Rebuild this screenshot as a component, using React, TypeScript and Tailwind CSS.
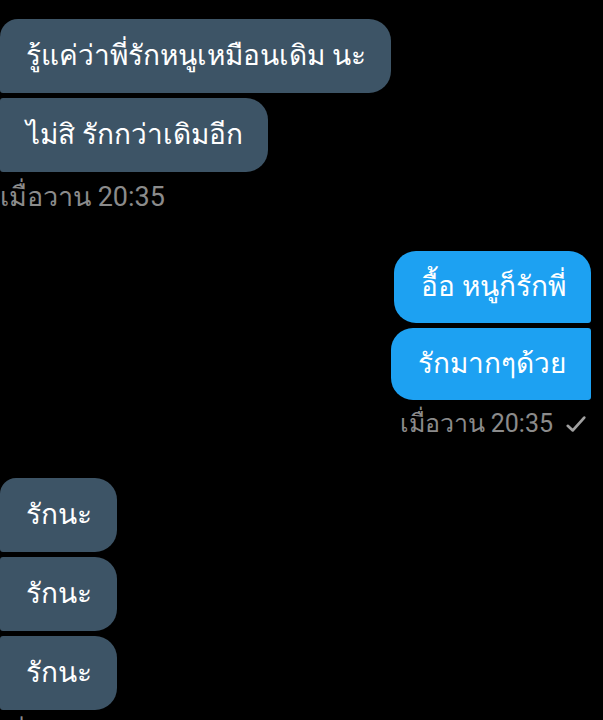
import React from "react";

const font = "font-['Roboto','Noto_Sans',sans-serif]";

const Check = () => (
  <svg width="22" height="22" viewBox="0 0 24 24" fill="none" stroke="#a0a0a0" strokeWidth="3" strokeLinecap="round" strokeLinejoin="round">
    <path d="M3 14l5.5 5L21 5" />
  </svg>
);

const Left: React.FC<{ text: string; cls: string }> = ({ text, cls }) => (
  <div className={`self-start bg-[#3d5466] text-white text-[28px] leading-[34px] pl-[26px] pr-[25px] py-[20px] ${cls}`}>
    {text}
  </div>
);

const Right: React.FC<{ text: string; cls: string }> = ({ text, cls }) => (
  <div className={`self-end bg-[#1da1f2] text-white text-[28px] leading-[34px] pl-[27px] pr-[25px] py-[19px] ${cls}`}>
    {text}
  </div>
);

export default function App() {
  return (
    <div className={`w-[603px] h-[720px] overflow-hidden bg-black flex flex-col ${font}`}>
      <div className="flex flex-col gap-[5px] pt-[19px]">
        <Left text="รู้แค่ว่าพี่รักหนูเหมือนเดิม นะ" cls="rounded-tl-[18px] rounded-r-[22px] rounded-bl-[3px]" />
        <Left text="ไม่สิ รักกว่าเดิมอีก" cls="rounded-l-[3px] rounded-r-[22px]" />
      </div>
      <div className="text-[#8b8b8b] text-[27px] leading-[34px] mt-[8px]">เมื่อวาน 20:35</div>

      <div className="flex flex-col gap-[5px] mt-[37px] pr-[12px]">
        <Right text="อื้อ หนูก็รักพี่" cls="rounded-l-[22px] rounded-tr-[22px] rounded-br-[3px]" />
        <Right text="รักมากๆด้วย" cls="rounded-l-[22px] rounded-r-[3px]" />
      </div>
      <div className="self-end flex items-center gap-[12px] pr-[16px] mt-[7px] text-[#8b8b8b] text-[25px] leading-[34px]">
        <span>เมื่อวาน 20:35</span>
        <Check />
      </div>

      <div className="flex flex-col gap-[5px] mt-[37px]">
        <Left text="รักนะ" cls="rounded-tl-[16px] rounded-r-[22px] rounded-bl-[3px]" />
        <Left text="รักนะ" cls="rounded-l-[3px] rounded-r-[22px]" />
        <Left text="รักนะ" cls="rounded-l-[3px] rounded-r-[22px]" />
      </div>
      <div className="text-[#8b8b8b] text-[27px] leading-[34px] mt-[8px]">เมื่อวาน 20:35</div>
    </div>
  );
}
